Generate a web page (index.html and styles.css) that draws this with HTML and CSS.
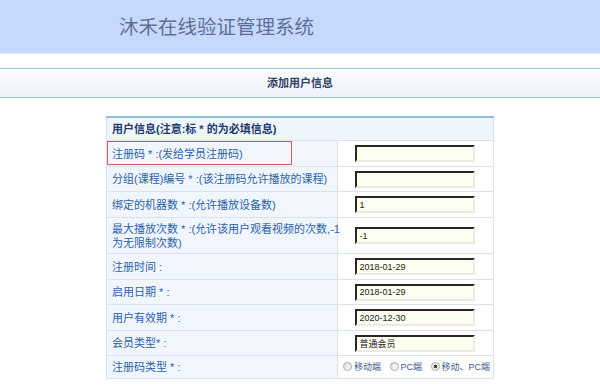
FILE: index.html
```html
<!DOCTYPE html>
<html lang="zh-CN">
<head>
    <meta charset="UTF-8">
    <meta name="viewport" content="width=device-width, initial-scale=1.0">
    <title>沐禾在线验证管理系统</title>
    <link rel="stylesheet" href="styles.css">
</head>
<body>
    <header class="top">
        <h1>沐禾在线验证管理系统</h1>
    </header>
    <div class="band">添加用户信息</div>

    <!-- 添加用户表单 -->
    <form class="user-form">
        <table class="form-table">
            <colgroup>
                <col class="col-label">
                <col class="col-field">
            </colgroup>
            <tr>
                <th colspan="2">用户信息(注意:标 * 的为必填信息)</th>
            </tr>
            <tr>
                <td class="label focus">注册码 * :(发给学员注册码)<div class="mark"></div></td>
                <td class="field"><input type="text" name="regcode"></td>
            </tr>
            <tr>
                <td class="label">分组(课程)编号 * :(该注册码允许播放的课程)</td>
                <td class="field"><input type="text" name="group"></td>
            </tr>
            <tr>
                <td class="label">绑定的机器数 * :(允许播放设备数)</td>
                <td class="field"><input type="text" name="machines" value="1"></td>
            </tr>
            <tr>
                <td class="label">最大播放次数 * :(允许该用户观看视频的次数,-1<br>为无限制次数)</td>
                <td class="field"><input type="text" name="maxplay" value="-1"></td>
            </tr>
            <tr>
                <td class="label">注册时间 :</td>
                <td class="field"><input type="text" name="regtime" value="2018-01-29"></td>
            </tr>
            <tr>
                <td class="label">启用日期 * :</td>
                <td class="field"><input type="text" name="startdate" value="2018-01-29"></td>
            </tr>
            <tr>
                <td class="label">用户有效期 * :</td>
                <td class="field"><input type="text" name="expire" value="2020-12-30"></td>
            </tr>
            <tr>
                <td class="label">会员类型* :</td>
                <td class="field"><input type="text" name="level" value="普通会员"></td>
            </tr>
            <tr>
                <td class="label">注册码类型 * :</td>
                <td class="field radios">
                    <label><input type="radio" name="type" value="mobile">移动端</label>
                    <label><input type="radio" name="type" value="pc">PC端</label>
                    <label><input type="radio" name="type" value="both" checked>移动、PC端</label>
                </td>
            </tr>
        </table>
    </form>
</body>
</html>
```

FILE: styles.css
```css
body {
    margin: 0;
    padding: 0;
    background-color: #fff;
    font-family: "Liberation Sans", "Noto Sans CJK SC", sans-serif;
}
.top {
    height: 53px;
    background-color: #c6d9fd;
    border-bottom: 1px solid #e4edfd;
}
.top h1 {
    margin: 0;
    padding: 13px 0 0 119px;
    font-family: "Noto Sans CJK SC", sans-serif;
    font-size: 19.5px;
    line-height: 26px;
    font-weight: 400;
    color: #5f6e9a;
}
.band {
    margin-top: 14px;
    height: 28px;
    line-height: 28px;
    border-top: 1px solid #9cc6da;
    border-bottom: 1px solid #9cc6da;
    background: linear-gradient(to bottom, #fbfcff, #eef2fb);
    text-align: center;
    font-size: 11px;
    font-weight: bold;
    color: #2f3f66;
}
.user-form {
    margin: 18px 0 0;
}
.form-table {
    width: 387px;
    margin: 0 auto;
    table-layout: fixed;
    border-collapse: collapse;
    border-top: 2px solid #91bfdb;
    font-size: 11px;
    line-height: 14px;
}
.col-label {
    width: 231px;
}
.col-field {
    width: 156px;
}
.form-table th {
    padding: 4px 5px;
    text-align: left;
    font-weight: bold;
    color: #1f3a6c;
    background-color: #eef5fd;
    border: 1px solid #dae2ee;
    border-top: none;
}
.form-table td {
    padding: 4px 5px 3.5px;
    border: 1px solid #dae2ee;
}
.label {
    color: #2a62ab;
    background-color: #f1f6fe;
    white-space: nowrap;
}
.focus {
    position: relative;
}
.mark {
    position: absolute;
    left: 0;
    top: 0;
    width: 183px;
    height: 22px;
    border-width: 1px;
    border-style: solid;
    border-color: #e25555;
}
.field {
    background-color: #fff;
    text-align: center;
}
.field input[type="text"] {
    display: block;
    box-sizing: border-box;
    width: 120px;
    height: 17px;
    margin: 0 auto;
    padding: 0 2px;
    border: 2px inset #ccc;
    border-top-color: #7b7b7b;
    border-left-color: #7b7b7b;
    border-right-color: #ebebe4;
    border-bottom-color: #ebebe4;
    background-color: #fefef0;
    font-family: "Liberation Sans", "Noto Sans CJK SC", sans-serif;
    font-size: 9px;
    color: #222;
}
.radios {
    font-size: 9px;
    color: #44588a;
    white-space: nowrap;
    padding-left: 8px;
    padding-right: 2px;
}
.radios label + label {
    margin-left: 6px;
}
.radios input {
    appearance: none;
    width: 9px;
    height: 9px;
    margin: 0 2px 0 0;
    border: 1px solid #a8a8a8;
    border-radius: 50%;
    background: linear-gradient(135deg, #ddd, #fff);
    vertical-align: -1px;
}
.radios input:checked {
    background: radial-gradient(circle, #444 0, #444 1.6px, #f4f4f4 2.2px);
}
```
